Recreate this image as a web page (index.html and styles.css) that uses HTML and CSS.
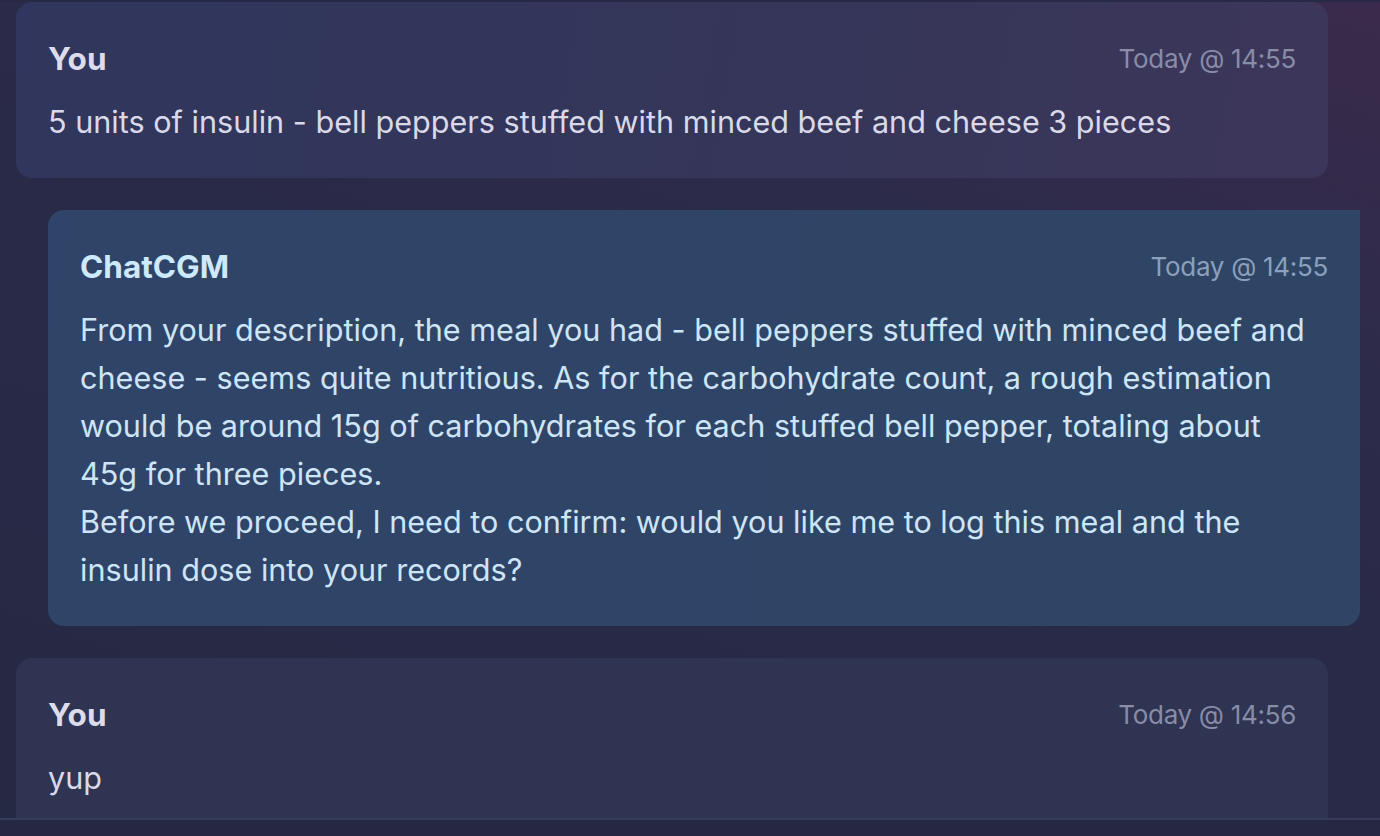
FILE: index.html
```html
<!DOCTYPE html>
<html lang="en">
<head>
<meta charset="utf-8">
<title>ChatCGM</title>
<link rel="stylesheet" href="styles.css">
</head>
<body>
<div class="app">
  <div class="scroll">
    <div class="thread">
      <div class="msg user">
        <div class="msg-head"><span class="name">You</span><span class="time">Today @ 14:55</span></div>
        <div class="msg-body">5 units of insulin - bell peppers stuffed with minced beef and cheese 3 pieces</div>
      </div>
      <div class="msg bot">
        <div class="msg-head"><span class="name">ChatCGM</span><span class="time">Today @ 14:55</span></div>
        <div class="msg-body">From your description, the meal you had - bell peppers stuffed with minced beef and cheese - seems quite nutritious. As for the carbohydrate count, a rough estimation would be around 15g of carbohydrates for each stuffed bell pepper, totaling about 45g for three pieces.<br>Before we proceed, I need to confirm: would you like me to log this meal and the insulin dose into your records?</div>
      </div>
      <div class="msg user plain">
        <div class="msg-head"><span class="name">You</span><span class="time">Today @ 14:56</span></div>
        <div class="msg-body">yup</div>
      </div>
    </div>
  </div>
  <div class="footer"></div>
</div>
</body>
</html>
```

FILE: styles.css
```css
* { box-sizing: border-box; }
html, body { margin: 0; padding: 0; height: 100%; }
body {
  font-family: Inter, "Noto Sans", "Liberation Sans", sans-serif;
  background: #282a47;
  overflow: hidden;
}
.app {
  width: 1380px;
  height: 836px;
  display: flex;
  flex-direction: column;
  background: linear-gradient(200deg, #3b2a4b 0%, #2c2b4a 30%, #282a47 55%, #262943 100%);
}
.scroll {
  flex: 1;
  min-height: 0;
  overflow: hidden;
  border-top: 2px solid #272946;
}
.thread {
  display: flex;
  flex-direction: column;
  gap: 32px;
  padding: 0 20px 0 16px;
}
.msg {
  padding: 32px;
  border-radius: 16px;
}
.msg-head {
  display: flex;
  justify-content: space-between;
  align-items: center;
  height: 48px;
  margin-bottom: 16px;
}
.name {
  font-weight: 700;
  font-size: 31.5px;
}
.time {
  font-size: 26px;
  letter-spacing: -0.3px;
}
.msg-body {
  font-size: 30.6px;
  line-height: 48px;
}
.user {
  margin-right: 32px;
  background: linear-gradient(100deg, #30365d 0%, #353659 60%, #3c365a 100%);
}
.user .name { color: #dcdcec; }
.user .time { color: #888ca8; }
.user .msg-body { color: #d9d9ea; }
.user.plain {
  background: #2e3451;
  border-radius: 16px 16px 0 0;
}
.bot {
  margin-left: 32px;
  background: linear-gradient(100deg, #2f4468 0%, #2f4565 100%);
  border-radius: 16px 0 16px 16px;
}
.bot .name { color: #cdeafc; }
.bot .time { color: #8aa0bc; }
.bot .msg-body { color: #cde5f7; padding-right: 16px; }
.footer {
  height: 18px;
  flex: none;
  background: #252840;
  border-top: 2px solid #343b5b;
}
```
